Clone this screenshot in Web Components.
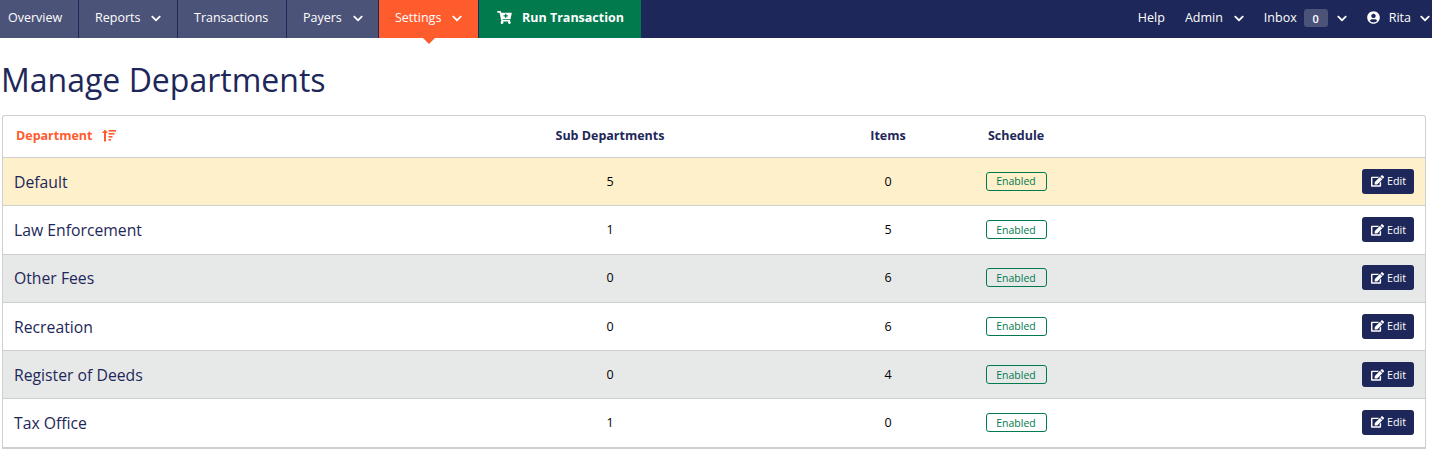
<!DOCTYPE html>
<html lang="en">
<head>
<meta charset="utf-8">
<title>Manage Departments</title>
<style>
  html, body { margin: 0; background: #fff; }
  body { font-family: "Open Sans", "Noto Sans", sans-serif; color: #1e2759; }
  main { padding: 0 6px 0 2px; }
</style>
</head>
<body>
<top-nav>
  <nav-item style="width:78px">Overview</nav-item>
  <nav-item style="width:98px" caret>Reports</nav-item>
  <nav-item style="width:108px">Transactions</nav-item>
  <nav-item style="width:91px" caret>Payers</nav-item>
  <nav-item style="width:99px" caret active>Settings</nav-item>
  <run-button slot="run">Run Transaction</run-button>
  <nav-link slot="right">Help</nav-link>
  <nav-link slot="right" caret>Admin</nav-link>
  <nav-link slot="right" caret badge="0">Inbox</nav-link>
  <nav-link slot="right" caret user>Rita</nav-link>
</top-nav>
<main>
  <page-title>Manage Departments</page-title>
  <dept-table>
    <dept-row name="Default" subs="5" items="0" tone="highlight"></dept-row>
    <dept-row name="Law Enforcement" subs="1" items="5"></dept-row>
    <dept-row name="Other Fees" subs="0" items="6" tone="grey"></dept-row>
    <dept-row name="Recreation" subs="0" items="6"></dept-row>
    <dept-row name="Register of Deeds" subs="0" items="4" tone="grey"></dept-row>
    <dept-row name="Tax Office" subs="1" items="0"></dept-row>
  </dept-table>
</main>

<script>
// iconos (svg en linea)
const CHEVRON = `<svg viewBox="0 0 448 512" width="10" height="11" fill="currentColor"><path d="M207.029 381.476L12.686 187.132c-9.373-9.373-9.373-24.569 0-33.941l22.667-22.667c9.357-9.357 24.522-9.375 33.901-.04L224 284.505l154.745-154.021c9.379-9.335 24.544-9.317 33.901.04l22.667 22.667c9.373 9.373 9.373 24.569 0 33.941L240.971 381.476c-9.373 9.372-24.569 9.372-33.942 0z"/></svg>`;
const USER = `<svg viewBox="0 0 496 512" width="13" height="13" fill="currentColor"><path d="M248 8C111 8 0 119 0 256s111 248 248 248 248-111 248-248S385 8 248 8zm0 96c48.6 0 88 39.4 88 88s-39.4 88-88 88-88-39.4-88-88 39.4-88 88-88zm0 344c-58.7 0-111.3-26.6-146.5-68.2 18.8-35.4 55.6-59.8 98.5-59.8 2.4 0 4.8.4 7.1 1.1 13 4.2 26.6 6.9 40.9 6.9 14.3 0 28-2.7 40.9-6.9 2.3-.7 4.7-1.1 7.1-1.1 42.9 0 79.7 24.4 98.5 59.8C359.3 421.4 306.7 448 248 448z"/></svg>`;
const CART = `<svg viewBox="0 0 576 512" width="15" height="13" fill="currentColor"><path d="M504.717 320H211.572l6.545 32h268.418c15.401 0 26.816 14.301 23.403 29.319l-5.517 24.276C523.112 414.668 536 433.828 536 456c0 31.202-25.519 56.444-56.824 55.994-29.823-.429-54.35-24.631-55.155-54.447-.44-16.287 6.085-31.049 16.803-41.548H231.176C241.553 426.165 248 440.326 248 456c0 31.813-26.528 57.431-58.67 55.938-28.54-1.325-51.751-24.385-53.251-52.917-1.158-22.034 10.436-41.455 28.051-51.586L93.883 64H24C10.745 64 0 53.255 0 40V24C0 10.745 10.745 0 24 0h102.529c11.401 0 21.228 8.021 23.513 19.19L159.208 64H551.99c15.401 0 26.816 14.301 23.403 29.319l-47.273 208C525.637 312.246 515.923 320 504.717 320zM408 168h-48v-40c0-8.837-7.163-16-16-16h-16c-8.837 0-16 7.163-16 16v40h-48c-8.837 0-16 7.163-16 16v16c0 8.837 7.163 16 16 16h48v40c0 8.837 7.163 16 16 16h16c8.837 0 16-7.163 16-16v-40h48c8.837 0 16-7.163 16-16v-16c0-8.837-7.163-16-16-16z"/></svg>`;
const EDIT = `<svg viewBox="0 0 576 512" width="13" height="12" fill="currentColor"><path d="M402.6 83.2l90.2 90.2c3.8 3.8 3.8 10 0 13.8L274.4 405.6l-92.8 10.3c-12.4 1.4-22.9-9.1-21.5-21.5l10.3-92.8L388.8 83.2c3.8-3.8 10-3.8 13.8 0zm162-22.9l-48.8-48.8c-15.2-15.2-39.9-15.2-55.2 0l-35.4 35.4c-3.8 3.8-3.8 10 0 13.8l90.2 90.2c3.8 3.8 10 3.8 13.8 0l35.4-35.4c15.2-15.3 15.2-40 0-55.2zM384 346.2V448H64V128h229.8c3.2 0 6.2-1.3 8.5-3.5l40-40c7.6-7.6 2.2-20.5-8.5-20.5H48C21.5 64 0 85.5 0 112v352c0 26.5 21.5 48 48 48h352c26.5 0 48-21.5 48-48V306.2c0-10.7-12.9-16-20.5-8.5l-40 40c-2.2 2.3-3.5 5.3-3.5 8.5z"/></svg>`;
const SORT = `<svg viewBox="0 0 14 13" width="14" height="13" fill="#ff5c2e"><path d="M3 0.5 L6 4 H4 V12.5 H2 V4 H0 Z"/><rect x="6.5" y="1" width="7.5" height="1.6"/><rect x="6.5" y="4" width="6" height="1.6"/><rect x="6.5" y="7" width="4" height="1.6"/><rect x="6.5" y="10" width="2.5" height="1.6"/></svg>`;

const COLUMNS = '389px 436px 120px 136px 1fr';

// Barra superior
class TopNav extends HTMLElement {
  constructor() {
    super();
    this.attachShadow({ mode: 'open' });
    this.shadowRoot.innerHTML = `
      <style>
        :host { display: flex; height: 38px; background: #1e2759; color: #fff; font-size: 12.5px; }
        .left { display: flex; gap: 1px; }
        .right { display: flex; margin-left: auto; }
      </style>
      <div class="left"><slot></slot><slot name="run"></slot></div>
      <div class="right"><slot name="right"></slot></div>
    `;
  }
}
customElements.define('top-nav', TopNav);

class NavItem extends HTMLElement {
  constructor() {
    super();
    this.attachShadow({ mode: 'open' });
    const caret = this.hasAttribute('caret');
    this.shadowRoot.innerHTML = `
      <style>
        :host {
          display: flex; position: relative; align-items: center; gap: 11px;
          padding: 0 0 4px 16px; background: #4c5379; white-space: nowrap; box-sizing: border-box;
        }
        :host(:first-child) { padding-left: 8px; }
        :host([active]) { background: #ff5c2e; }
        :host([active])::after {
          content: ""; position: absolute; left: 50%; top: 38px; margin-left: -6px;
          border: 6px solid transparent; border-top-color: #ff5c2e; border-bottom: 0;
        }
        svg { display: block; margin-top: 3px; }
      </style>
      <slot></slot>${caret ? CHEVRON : ''}
    `;
  }
}
customElements.define('nav-item', NavItem);

class RunButton extends HTMLElement {
  constructor() {
    super();
    this.attachShadow({ mode: 'open' });
    this.shadowRoot.innerHTML = `
      <style>
        :host {
          display: flex; align-items: center; gap: 10px; padding: 0 17px 4px 18px; box-sizing: border-box;
          background: #017a4d; font-weight: 700; white-space: nowrap;
        }
        svg { display: block; }
      </style>
      ${CART}<slot></slot>
    `;
  }
}
customElements.define('run-button', RunButton);

class NavLink extends HTMLElement {
  constructor() {
    super();
    this.attachShadow({ mode: 'open' });
    const badge = this.getAttribute('badge');
    this.shadowRoot.innerHTML = `
      <style>
        :host { display: flex; align-items: center; padding: 0 0 4px 20px; white-space: nowrap; box-sizing: border-box; }
        :host(:last-child) { padding-right: 2px; }
        :host(:last-child) .caret { margin-left: 9px; }
        .caret { display: block; margin: 3px 0 0 11px; }
        .caret svg { display: block; }
        .badge {
          margin-left: 7px; width: 24px; height: 18px; border-radius: 3px; background: #4c5379;
          display: flex; align-items: center; justify-content: center; font-size: 11px; font-weight: 600; margin-top: 2px;
        }
        .badge + .caret { margin-left: 9px; }
        .user { display: block; margin-right: 9px; }
        .user svg { display: block; }
      </style>
      ${this.hasAttribute('user') ? `<span class="user">${USER}</span>` : ''}
      <slot></slot>
      ${badge !== null ? `<span class="badge">${badge}</span>` : ''}
      ${this.hasAttribute('caret') ? `<span class="caret">${CHEVRON}</span>` : ''}
    `;
  }
}
customElements.define('nav-link', NavLink);

class PageTitle extends HTMLElement {
  constructor() {
    super();
    this.attachShadow({ mode: 'open' });
    this.shadowRoot.innerHTML = `
      <style>
        :host { display: block; font-size: 32px; line-height: 38px; font-weight: 500; padding: 23px 0 16px; margin-left: -1px; color: #1e2759; }
      </style>
      <slot></slot>
    `;
  }
}
customElements.define('page-title', PageTitle);

// Tabla de departamentos
class DeptTable extends HTMLElement {
  constructor() {
    super();
    this.attachShadow({ mode: 'open' });
    this.shadowRoot.innerHTML = `
      <style>
        :host {
          display: block; border: 1px solid #ccd0d0; border-bottom-width: 2px; border-radius: 3px 3px 0 0;
        }
        .head {
          display: grid; grid-template-columns: ${COLUMNS}; align-items: center; height: 42px; box-sizing: border-box;
          padding-bottom: 2px; border-bottom: 1px solid #ccd0d0; font-size: 12.5px; font-weight: 700; text-align: center;
        }
        .dept { display: flex; align-items: center; gap: 9px; padding-left: 13px; color: #ff5c2e; }
        .dept svg { display: block; }
      </style>
      <div class="head">
        <span class="dept">Department ${SORT}</span>
        <span>Sub Departments</span>
        <span>Items</span>
        <span>Schedule</span>
      </div>
      <slot></slot>
    `;
  }
}
customElements.define('dept-table', DeptTable);

class DeptRow extends HTMLElement {
  constructor() {
    super();
    this.attachShadow({ mode: 'open' });
    const name = this.getAttribute('name');
    const subs = this.getAttribute('subs');
    const items = this.getAttribute('items');
    this.shadowRoot.innerHTML = `
      <style>
        :host {
          display: grid; grid-template-columns: ${COLUMNS}; align-items: center; height: 48.3px; padding-bottom: 0.6px;
          box-sizing: border-box; border-bottom: 1px solid #ccd0d0; font-size: 12.5px; color: #000; text-align: center;
        }
        :host(:last-child) { border-bottom-color: transparent; height: 47.6px; }
        :host([tone="highlight"]) { background: #fdf0cb; }
        :host([tone="grey"]) { background: #e7e9e9; }
        .name { font-size: 15.75px; color: #1e2759; text-align: left; padding: 0.6px 0 0 11px; }
        .pill { display: flex; justify-content: center; }
        .action { display: flex; justify-content: flex-end; padding-right: 11px; }
      </style>
      <span class="name">${name}</span>
      <span>${subs}</span>
      <span>${items}</span>
      <span class="pill"><status-pill>Enabled</status-pill></span>
      <span class="action"><edit-button>Edit</edit-button></span>
    `;
  }
}
customElements.define('dept-row', DeptRow);

class StatusPill extends HTMLElement {
  constructor() {
    super();
    this.attachShadow({ mode: 'open' });
    this.shadowRoot.innerHTML = `
      <style>
        :host {
          display: flex; align-items: center; justify-content: center; width: 61px; height: 19px; padding-top: 0.6px; box-sizing: border-box;
          border: 1px solid #017a4d; border-radius: 3px; color: #017a4d; font-size: 10.5px; font-weight: 500; line-height: 1;
        }
      </style>
      <slot></slot>
    `;
  }
}
customElements.define('status-pill', StatusPill);

class EditButton extends HTMLElement {
  constructor() {
    super();
    this.attachShadow({ mode: 'open' });
    this.shadowRoot.innerHTML = `
      <style>
        :host {
          display: flex; align-items: center; gap: 3px; width: 52px; height: 25px; padding-left: 9px;
          background: #1e2759; color: #fff; border-radius: 3px; font-size: 10.7px; font-weight: 500; box-sizing: border-box;
        }
        svg { display: block; }
      </style>
      ${EDIT}<slot></slot>
    `;
  }
}
customElements.define('edit-button', EditButton);
</script>
</body>
</html>
